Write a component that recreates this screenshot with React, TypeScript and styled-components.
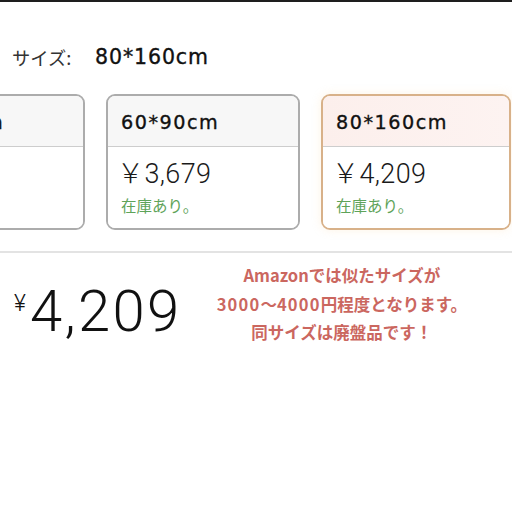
import {FC} from "react";
import styled, {createGlobalStyle} from "styled-components";

const GlobalStyle = createGlobalStyle`
  html, body {
    margin: 0;
    padding: 0;
    background: #ffffff;
  }
  body {
    width: 512px;
    height: 512px;
    overflow: hidden;
    font-family: "Liberation Sans", "Noto Sans CJK JP", sans-serif;
  }
`;

const Page = styled.div`
  width: 512px;
  height: 512px;
  overflow: hidden;
  background: #ffffff;
`;

const TopRule = styled.div`
  height: 2px;
  background: #1e1e1e;
`;

const SizeLine = styled.div`
  display: flex;
  align-items: center;
  margin-top: 43px;
  padding-left: 12px;
  height: 24px;
`;

const SizeLabel = styled.span`
  font-family: "Noto Sans CJK JP", sans-serif;
  font-weight: 400;
  font-size: 18.3px;
  color: #333;
  width: 83px;
`;

const SizeValue = styled.span`
  font-family: "DejaVu Sans", sans-serif;
  font-size: 20.5px;
  letter-spacing: 0.9px;
  color: #111;
  -webkit-text-stroke: 0.35px #111;
`;

const CardRow = styled.div`
  display: flex;
  column-gap: 21px;
  margin-top: 25px;
  margin-left: -109px;
  width: 620px;
`;

const Card = styled.div<{ $selected?: boolean; $grow?: boolean }>`
  box-sizing: border-box;
  flex: ${p => (p.$grow ? "1 1 auto" : "0 0 194px")};
  height: 136px;
  border: 2px solid ${p => (p.$selected ? "#d8b189" : "#acacac")};
  border-radius: 9px;
  overflow: hidden;
  display: flex;
  flex-direction: column;
  box-shadow: ${p => (p.$selected ? "0 0 10px rgba(250, 210, 150, 0.25)" : "none")};
`;

const CardHeader = styled.div<{ $selected?: boolean }>`
  height: 51px;
  box-sizing: border-box;
  border-bottom: 1px solid #cdcdcd;
  background: ${p => (p.$selected ? "linear-gradient(90deg, #fcefec, #fdf3f1)" : "#f7f7f7")};
  display: flex;
  align-items: center;
  padding: 3px 13px 0;
`;

const CardTitle = styled.span`
  font-family: "DejaVu Sans", sans-serif;
  font-size: 19.2px;
  letter-spacing: 1.5px;
  color: #111;
  -webkit-text-stroke: 0.35px #111;
`;

const CardBody = styled.div`
  padding: 11px 13px 0 9px;
  background: #ffffff;
  flex: 1;
`;

const CardPrice = styled.div`
  font-family: "Roboto", "Liberation Sans", "Noto Sans CJK JP", sans-serif;
  font-weight: 300;
  font-size: 27px;
  line-height: 32px;
  letter-spacing: 0.4px;
  color: #1a1a1a;
`;

const Stock = styled.div`
  margin-top: 6px;
  margin-left: 4px;
  font-family: "Noto Sans CJK JP", sans-serif;
  font-size: 15.5px;
  line-height: 18px;
  color: #5ea359;
`;

const Divider = styled.div`
  margin-top: 21px;
  height: 2px;
  background: #e3e3e3;
`;

const PriceRow = styled.div`
  display: flex;
  align-items: flex-start;
`;

const BigPrice = styled.div`
  display: flex;
  align-items: flex-start;
  padding-left: 14px;
  margin-top: 29px;
  color: #111;
  font-family: "Roboto", "Liberation Sans", sans-serif;
  font-weight: 300;
`;

const Yen = styled.span`
  font-size: 23px;
  line-height: 1;
  margin-top: 10px;
  margin-right: 4px;
`;

const Amount = styled.span`
  font-size: 58px;
  line-height: 1;
  letter-spacing: 2.4px;
`;

const Note = styled.div`
  flex: 1;
  margin-top: 8px;
  margin-right: 10px;
  text-align: center;
  font-family: "Noto Sans CJK JP", sans-serif;
  font-weight: 700;
  font-size: 16.5px;
  line-height: 28.5px;
  color: #cb675f;
`;

const Digits = styled.span`
  letter-spacing: 1.2px;
`;

type TOption = {
    size: string
    price?: string
    selected?: boolean
}

// first card is cropped by the screenshot, only the end of its title shows
const options: TOption[] = [
    {size: "40*60cm"},
    {size: "60*90cm", price: "￥3,679"},
    {size: "80*160cm", price: "￥4,209", selected: true},
];

const App: FC = () => {
    return (
        <Page>
            <GlobalStyle/>
            <TopRule/>
            <SizeLine>
                <SizeLabel>サイズ:</SizeLabel>
                <SizeValue>80*160cm</SizeValue>
            </SizeLine>
            <CardRow>
                {options.map((o, i) => (
                    <Card key={o.size} $selected={o.selected} $grow={i === options.length - 1}>
                        <CardHeader $selected={o.selected}>
                            <CardTitle>{o.size}</CardTitle>
                        </CardHeader>
                        <CardBody>
                            {o.price && <CardPrice>{o.price}</CardPrice>}
                            {o.price && <Stock>在庫あり。</Stock>}
                        </CardBody>
                    </Card>
                ))}
            </CardRow>
            <Divider/>
            <PriceRow>
                <BigPrice>
                    <Yen>¥</Yen>
                    <Amount>4,209</Amount>
                </BigPrice>
                <Note>
                    Amazonでは似たサイズが<br/>
                    <Digits>3000</Digits>〜<Digits>4000</Digits>円程度となります。<br/>
                    同サイズは廃盤品です！
                </Note>
            </PriceRow>
        </Page>
    );
};

export default App;
